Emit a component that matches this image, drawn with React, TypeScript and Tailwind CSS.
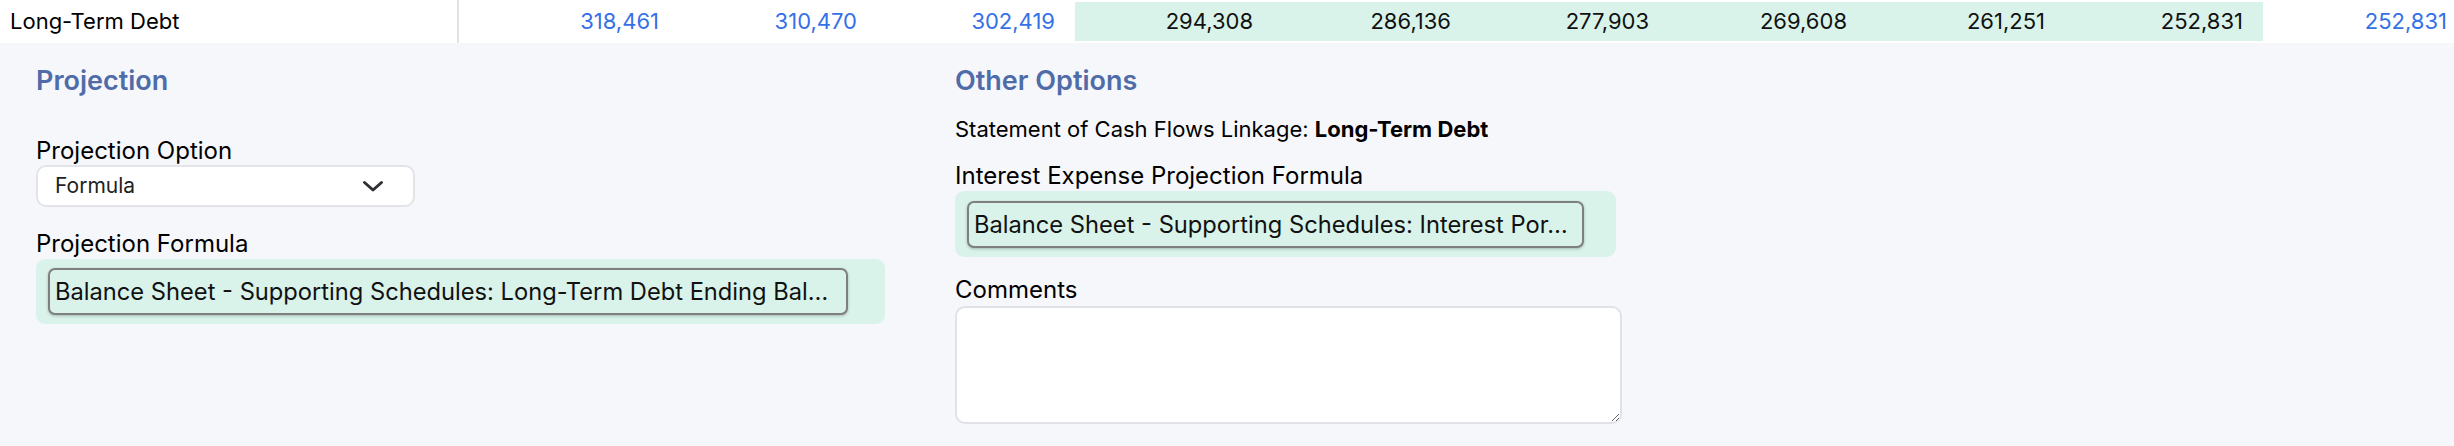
import React from 'react';

const values = [
  { v: '318,461', kind: 'hist', w: 'w-[220px]' },
  { v: '310,470', kind: 'hist', w: 'w-[198px]' },
  { v: '302,419', kind: 'hist', w: 'w-[198px]' },
  { v: '294,308', kind: 'proj', w: 'w-[198px]' },
  { v: '286,136', kind: 'proj', w: 'w-[198px]' },
  { v: '277,903', kind: 'proj', w: 'w-[198px]' },
  { v: '269,608', kind: 'proj', w: 'w-[198px]' },
  { v: '261,251', kind: 'proj', w: 'w-[198px]' },
  { v: '252,831', kind: 'proj', w: 'w-[198px]' },
  { v: '252,831', kind: 'hist', w: 'w-[204px]' },
];

const ChevronDown = () => (
  <svg width="22" height="13" viewBox="0 0 22 13" fill="none" stroke="#2f3033" strokeWidth={3} strokeLinecap="round" strokeLinejoin="round">
    <polyline points="2.5,2.5 11,10 19.5,2.5" />
  </svg>
);

const FormulaBox = ({ text, outer, inner }: { text: string; outer: string; inner: string }) => (
  <div className={`${outer} bg-[#d9f3ea] rounded-[9px] pb-[9px] pl-[12px]`}>
    <div className={`${inner} h-[47px] border-2 border-[#7f7f7f] rounded-[7px] bg-[#d9f3ea] shadow-[0_1px_3px_rgba(0,0,0,0.25)] flex items-center pl-[5px]`}>
      <span className="text-[23.7px] text-[#111] whitespace-nowrap">{text}</span>
    </div>
  </div>
);

export default function App() {
  return (
    <div className="w-[2454px] h-[446px] overflow-hidden bg-[#f6f7fb] font-['Inter',sans-serif] text-black">
      {/* line item row */}
      <div className="flex h-[43px] bg-white text-[22px] overflow-hidden">
        <div className="w-[459px] shrink-0 border-r-2 border-[#e3e3e3] pl-[10px] flex items-center">
          Long-Term Debt
        </div>
        {values.map((c, i) => (
          <div key={i} className={`${c.w} shrink-0 py-[2px]`}>
            <div
              className={`h-full flex items-center justify-end pr-5 ${
                c.kind === 'proj' ? 'bg-[#d9f3ea] text-[#111]' : 'text-[#3571e6]'
              }`}
            >
              {c.v}
            </div>
          </div>
        ))}
      </div>

      {/* settings panel */}
      <div className="flex px-[36px] pt-[20px]">
        <div className="w-[919px] shrink-0">
          <h3 className="text-[27px] leading-[36px] font-semibold text-[#4f6ca8]">Projection</h3>
          <div className="mt-[37px] text-[24px] leading-[29px]">Projection Option</div>
          <div className="w-[379px] h-[42px] bg-white border-2 border-[#e2e4e9] rounded-[10px] flex items-center justify-between pl-[17px] pr-[29px]">
            <span className="text-[21px] text-[#222]">Formula</span>
            <ChevronDown />
          </div>
          <div className="mt-[22px] text-[24px] leading-[30px]">Projection Formula</div>
          <FormulaBox
            outer="w-[849px] pt-[9px]"
            inner="w-[800px]"
            text="Balance Sheet - Supporting Schedules: Long-Term Debt Ending Bal…"
          />
        </div>

        <div className="flex-1">
          <h3 className="text-[27px] leading-[36px] font-semibold text-[#4f6ca8]">Other Options</h3>
          <p className="mt-[16px] text-[22px] leading-[28px]">
            Statement of Cash Flows Linkage: <span className="font-bold">Long-Term Debt</span>
          </p>
          <div className="mt-[18px] text-[24px] leading-[30px]">Interest Expense Projection Formula</div>
          <FormulaBox
            outer="w-[661px] pt-[10px]"
            inner="w-[617px]"
            text="Balance Sheet - Supporting Schedules: Interest Por…"
          />
          <div className="mt-[18px] text-[24px] leading-[30px]">Comments</div>
          <textarea className="mt-[1px] block w-[667px] h-[118px] bg-white border-2 border-[#e0e2e7] rounded-[10px] outline-none resize-y" />
        </div>
      </div>
    </div>
  );
}
